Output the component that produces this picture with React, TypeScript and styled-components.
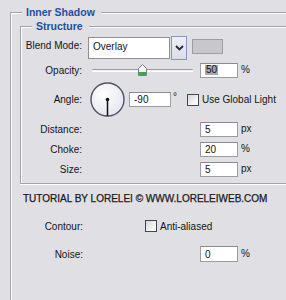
import styled, { createGlobalStyle } from 'styled-components';

const LINE = '#a2a2aa';

const Global = createGlobalStyle`
  html, body {
    margin: 0;
    padding: 0;
    background: #e0dfe4;
  }
  body {
    font-family: "Liberation Sans", Arial, sans-serif;
    font-size: 10px;
    color: #141414;
  }
`;

const Panel = styled.div`
  width: 286px;
  height: 300px;
  box-sizing: border-box;
  padding: 5px 0 0 10px;
  overflow: hidden;
  background: #e0dfe4;
`;

const Head = styled.div`
  display: flex;
  height: 14px;
`;

const Corner = styled.span`
  width: 12px;
  height: 7px;
  margin-top: 7px;
  box-sizing: border-box;
  border-top: 1px solid ${LINE};
  border-left: 1px solid ${LINE};
  box-shadow: inset 1px 1px 0 #fff;
`;

const Title = styled.span`
  margin: 0 6px 0 4px;
  font-size: 10.5px;
  font-weight: bold;
  line-height: 14px;
  color: #1f4f9e;
  white-space: nowrap;
`;

const Rule = styled.span`
  flex: 1;
  height: 2px;
  margin-top: 7px;
  box-sizing: border-box;
  border-top: 1px solid ${LINE};
  border-bottom: 1px solid #fff;
`;

const Body = styled.div<{ $closed?: boolean }>`
  border-left: 1px solid ${LINE};
  padding: ${p => (p.$closed ? '3px 0 4px 0' : '0 0 0 9px')};
  border-bottom: ${p => (p.$closed ? `1px solid ${LINE}` : 'none')};
  box-shadow: inset 1px 0 0 #fff${p => (p.$closed ? ', 0 1px 0 #fff' : '')};
`;

const Row = styled.div<{ $h: number; $label: number; $top?: number }>`
  display: grid;
  grid-template-columns: ${p => p.$label}px 1fr;
  column-gap: ${p => 88 - 20 - p.$label - (p.$label === 61 ? 1 : 0)}px;
  align-items: center;
  height: ${p => p.$h}px;
  margin-top: ${p => p.$top ?? 0}px;
`;

const Label = styled.span<{ $lift?: number }>`
  text-align: right;
  white-space: nowrap;
  padding-bottom: ${p => p.$lift ?? 0}px;
`;

const Controls = styled.div<{ $indent?: number }>`
  display: flex;
  align-items: center;
  padding-left: ${p => p.$indent ?? 0}px;
  white-space: nowrap;
`;

const Field = styled.div`
  width: 82px;
  height: 22px;
  box-sizing: border-box;
  border: 1px solid #8d8d93;
  background: #fff;
  padding: 0 0 3px 4px;
  display: flex;
  align-items: center;
  font-size: 10px;
`;

const ArrowButton = styled.div`
  width: 16px;
  height: 24px;
  margin-left: 1px;
  box-sizing: border-box;
  border: 1px solid #8597b8;
  background: linear-gradient(#eef0f6, #d9dde8);
  display: flex;
  align-items: center;
  justify-content: center;
`;

const Swatch = styled.div`
  width: 31px;
  height: 15px;
  margin: 0 0 3px 5px;
  box-sizing: border-box;
  border: 1px solid #9d9da3;
  background: #c8c8ca;
`;

const Track = styled.div`
  position: relative;
  width: 101px;
  height: 3px;
  margin-left: 4px;
  box-sizing: border-box;
  border-top: 1px solid #9a9aa2;
  border-bottom: 1px solid #fff;
  background: #f3f3f5;
  border-radius: 1px;
`;

const Thumb = styled.svg`
  position: absolute;
  left: 46px;
  top: -6px;
`;

const Input = styled.div<{ $w?: number; $h?: number; $gap?: number }>`
  width: ${p => p.$w ?? 38}px;
  height: ${p => p.$h ?? 15}px;
  margin-left: ${p => p.$gap ?? 0}px;
  box-sizing: border-box;
  border: 1px solid #9c9ca2;
  border-top-color: #8a8a90;
  background: #fff;
  padding-left: 4px;
  display: flex;
  align-items: center;
  font-size: 10px;
`;

const Selected = styled.span`
  background: #a7a8b5;
  padding: 0 1px;
  line-height: 10px;
`;

const Unit = styled.span<{ $gap?: number; $raise?: number }>`
  margin-left: ${p => p.$gap ?? 3}px;
  padding-bottom: ${p => p.$raise ?? 1}px;
`;

const Dial = styled.svg`
  margin-left: 2px;
  display: block;
`;

const Check = styled.span<{ $gap: number }>`
  width: 12px;
  height: 12px;
  margin-left: ${p => p.$gap}px;
  box-sizing: border-box;
  border: 1px solid #3f4954;
  background: linear-gradient(135deg, #d6d6d2, #f7f7f7 70%);
`;

const Credit = styled.div`
  margin-top: 9px;
  padding-left: 3px;
  line-height: 12px;
  font-size: 10px;
  color: #1a1a1a;
  white-space: nowrap;
  -webkit-text-stroke: 0.25px #1a1a1a;
`;

export default function App() {
  return (
    <Panel>
      <Global />
      <section>
        <Head>
          <Corner />
          <Title>Inner Shadow</Title>
          <Rule />
        </Head>
        <Body>
          <section>
            <Head>
              <Corner />
              <Title>Structure</Title>
              <Rule />
            </Head>
            <Body $closed>
              <Row $h={24} $label={61}>
                <Label $lift={6}>Blend Mode:</Label>
                <Controls>
                  <Field>Overlay</Field>
                  <ArrowButton>
                    <svg width="9" height="6" viewBox="0 0 9 6">
                      <path d="M1 1 L4.5 4.5 L8 1" fill="none" stroke="#2a2a30" strokeWidth="1.8" />
                    </svg>
                  </ArrowButton>
                  <Swatch />
                </Controls>
              </Row>
              <Row $h={20} $label={61}>
                <Label>Opacity:</Label>
                <Controls>
                  <Track>
                    <Thumb width="9" height="12" viewBox="0 0 9 12">
                      <path d="M0.5 4.5 L4.5 0.5 L8.5 4.5 L8.5 11.5 L0.5 11.5 Z" fill="#f4f4f4" stroke="#7c7c84" />
                      <rect x="1" y="8" width="7" height="3" fill="#3ea84a" />
                    </Thumb>
                  </Track>
                  <Input $gap={7}>
                    <Selected>50</Selected>
                  </Input>
                  <Unit>%</Unit>
                </Controls>
              </Row>
              <Row $h={39} $label={61}>
                <Label>Angle:</Label>
                <Controls>
                  <Dial width="35" height="35" viewBox="0 0 35 35">
                    <defs>
                      <radialGradient id="dialFill" cx="0.4" cy="0.35" r="0.7">
                        <stop offset="0" stopColor="#ffffff" />
                        <stop offset="1" stopColor="#e4e5ee" />
                      </radialGradient>
                    </defs>
                    <circle cx="17.5" cy="17.5" r="16.5" fill="url(#dialFill)" stroke="#4e5466" strokeWidth="1.4" />
                    <line x1="17.5" y1="17.5" x2="17.5" y2="34" stroke="#111" strokeWidth="1.5" />
                    <circle cx="17.5" cy="17.5" r="1.8" fill="#111" />
                  </Dial>
                  <Input $w={42} $gap={4}>-90</Input>
                  <Unit $gap={2} $raise={6}>°</Unit>
                  <Check $gap={10} />
                  <Unit $gap={3} $raise={0}>Use Global Light</Unit>
                </Controls>
              </Row>
              <Row $h={20} $label={61}>
                <Label>Distance:</Label>
                <Controls $indent={112}>
                  <Input>5</Input>
                  <Unit>px</Unit>
                </Controls>
              </Row>
              <Row $h={20} $label={61}>
                <Label>Choke:</Label>
                <Controls $indent={112}>
                  <Input>20</Input>
                  <Unit>%</Unit>
                </Controls>
              </Row>
              <Row $h={20} $label={61}>
                <Label>Size:</Label>
                <Controls $indent={112}>
                  <Input>5</Input>
                  <Unit>px</Unit>
                </Controls>
              </Row>
            </Body>
          </section>
          <Credit>TUTORIAL BY LORELEI © WWW.LORELEIWEB.COM</Credit>
          <Row $h={20} $label={63} $top={11}>
            <Label>Contour:</Label>
            <Controls $indent={57}>
              <Check $gap={0} />
              <Unit $gap={3} $raise={0}>Anti-aliased</Unit>
            </Controls>
          </Row>
          <Row $h={20} $label={63} $top={8}>
            <Label>Noise:</Label>
            <Controls $indent={112}>
              <Input $h={16}>0</Input>
              <Unit>%</Unit>
            </Controls>
          </Row>
          <div style={{ height: 40 }} />
        </Body>
      </section>
    </Panel>
  );
}
